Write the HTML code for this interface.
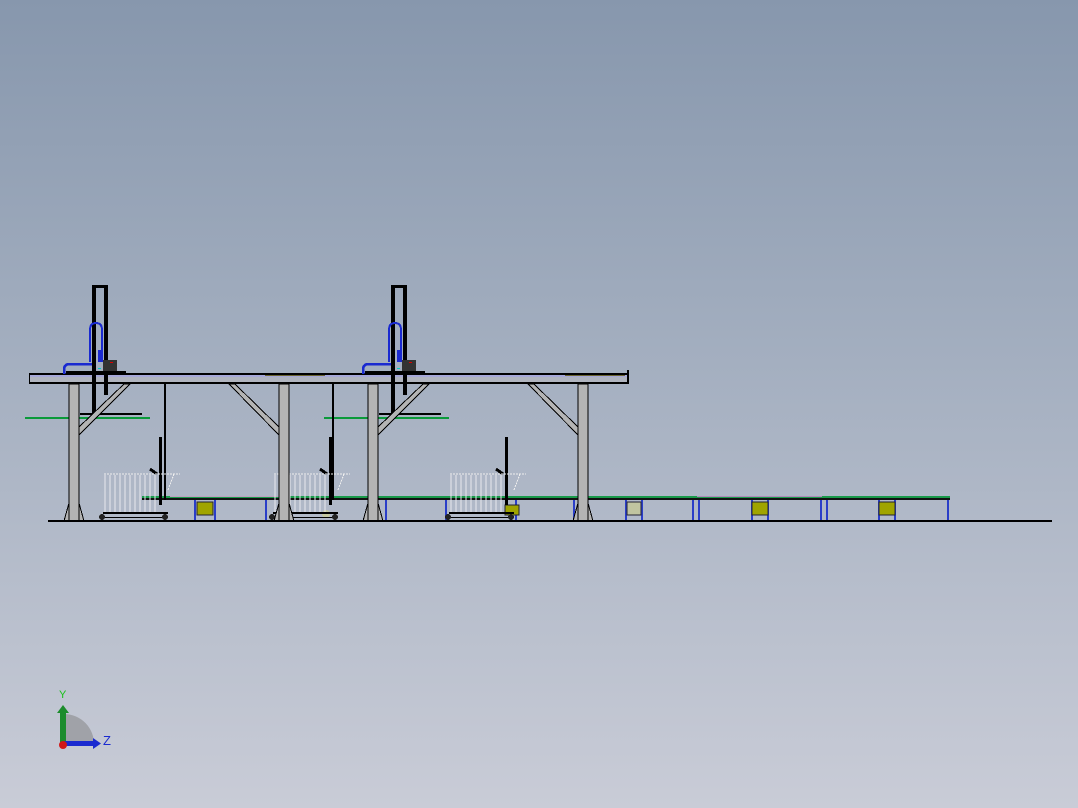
<!DOCTYPE html>
<html><head><meta charset="utf-8"><style>
html,body{margin:0;padding:0}
body{width:1078px;height:808px;overflow:hidden;background:linear-gradient(180deg,#8797ad 0%,#a4afc0 45%,#c9ccd7 100%);}
svg{position:absolute;left:0;top:0}
</style></head><body>
<svg width="1078" height="808" viewBox="0 0 1078 808" xmlns="http://www.w3.org/2000/svg" shape-rendering="crispEdges">
<defs>
<g id="tower">
  <rect x="92" y="285" width="4" height="128" fill="#000"/>
  <rect x="104" y="285" width="4" height="110" fill="#000"/>
  <rect x="92" y="285" width="16" height="3" fill="#000"/>
  <path d="M90 362 V330 Q90 323 96 323 Q102 323 102 330 V362" fill="none" stroke="#1a2ad0" stroke-width="2"/>
  <rect x="98" y="350" width="4" height="12" fill="#1a2ad0"/>
  <path d="M92 364 H70 Q64 364 64 370 V374" fill="none" stroke="#1a2ad0" stroke-width="2.5"/>
  <rect x="103" y="360" width="14" height="12" fill="#333"/>
  <rect x="110" y="362" width="3" height="1" fill="#d00"/>
  <rect x="98" y="368" width="3" height="1" fill="#0cc"/>
  <rect x="66" y="371" width="60" height="3" fill="#000"/>
  <rect x="80" y="413" width="62" height="2" fill="#000"/>
  <rect x="25" y="417" width="125" height="2" fill="#0a9a3a"/>
</g>
<g id="cart">
  <rect x="159" y="437" width="3" height="68" fill="#000"/>
  <path d="M150 469 L157 474" stroke="#000" stroke-width="3"/>
  <g stroke="#e8e8ee" stroke-width="1">
    <path d="M105 475 V512 M110 475 V512 M115 475 V512 M120 475 V512 M125 475 V512 M130 475 V512 M135 475 V512 M140 475 V512 M145 475 V512 M150 475 V512 M155 475 V512"/>
  </g>
  <path d="M104 474 H176 L180 474 M174 474 L168 490" stroke="#eee" stroke-width="1" stroke-dasharray="2 1" fill="none"/>
  <rect x="103" y="512" width="65" height="2" fill="#000"/>
  <rect x="103" y="517" width="65" height="1" fill="#000"/>
  <circle cx="102" cy="517" r="3" fill="#222"/>
  <circle cx="165" cy="517" r="3" fill="#222"/>
</g>
<g id="col">
  <rect x="69" y="384" width="10" height="137" fill="#b4b4b4" stroke="#000" stroke-width="1"/>
  <path d="M64 521 L69 503 V521 Z M84 521 L79 503 V521 Z" fill="#b4b4b4" stroke="#000" stroke-width="1"/>
</g>
</defs>

<rect x="29" y="373" width="599" height="2" fill="#000"/>
<rect x="29" y="375" width="599" height="2" fill="#a6a8d8"/>
<rect x="29" y="377" width="599" height="5" fill="#b0b4be"/>
<rect x="29" y="382" width="599" height="2" fill="#000"/>
<rect x="29" y="373" width="1" height="11" fill="#000"/>
<rect x="627" y="370" width="2" height="14" fill="#000"/>
<rect x="265" y="375" width="60" height="1" fill="#6b6530"/>
<rect x="565" y="375" width="60" height="1" fill="#6b6530"/>

<rect x="142" y="496" width="808" height="2" fill="#1a9a4a"/>
<rect x="142" y="498" width="808" height="2" fill="#111"/>
<rect x="697" y="496" width="125" height="1" fill="#b088b8"/>
<rect x="170" y="496" width="110" height="1" fill="#c0a0c0"/>
<g fill="#2a3ec8">
  <rect x="194" y="500" width="2" height="21"/><rect x="214" y="500" width="2" height="21"/>
  <rect x="265" y="500" width="2" height="21"/><rect x="385" y="500" width="2" height="21"/>
  <rect x="445" y="500" width="2" height="21"/><rect x="515" y="500" width="2" height="21"/>
  <rect x="573" y="500" width="2" height="21"/><rect x="625" y="500" width="2" height="21"/>
  <rect x="641" y="500" width="2" height="21"/><rect x="692" y="500" width="2" height="21"/>
  <rect x="698" y="500" width="2" height="21"/><rect x="751" y="500" width="2" height="21"/>
  <rect x="767" y="500" width="2" height="21"/><rect x="820" y="500" width="2" height="21"/>
  <rect x="826" y="500" width="2" height="21"/><rect x="878" y="500" width="2" height="21"/>
  <rect x="894" y="500" width="2" height="21"/><rect x="947" y="500" width="2" height="21"/>
</g>
<g fill="#a0a400" stroke="#223" stroke-width="1">
  <rect x="197" y="502" width="16" height="13"/>
  <rect x="752" y="502" width="16" height="13"/>
  <rect x="879" y="502" width="16" height="13"/>
  <rect x="505" y="505" width="14" height="10"/>
</g>
<rect x="627" y="502" width="14" height="13" fill="#c0c4a0" stroke="#223"/>
<circle cx="326" cy="514" r="4" fill="#c4c8a0"/>

<use href="#tower"/>
<use href="#tower" x="299"/>
<rect x="164" y="384" width="2" height="116" fill="#000"/>
<rect x="332" y="384" width="2" height="116" fill="#000"/>
<use href="#cart"/>
<use href="#cart" x="170"/>
<use href="#cart" x="346"/>

<g fill="#b4b4b4" stroke="#000" stroke-width="1">
  <path d="M79 427 L124 384 L130 384 L79 435 Z"/>
  <path d="M229 384 L235 384 L279 427 L279 435 Z"/>
  <path d="M378 427 L423 384 L429 384 L378 435 Z"/>
  <path d="M528 384 L534 384 L578 427 L578 435 Z"/>
</g>
<use href="#col"/>
<use href="#col" x="210"/>
<use href="#col" x="299"/>
<use href="#col" x="509"/>

<rect x="48" y="520" width="1004" height="2" fill="#000"/>

<g shape-rendering="geometricPrecision">
<path d="M64 745 V714 A30 30 0 0 1 94 745 Z" fill="#a0a2a8"/>
<rect x="60" y="712" width="6" height="33" fill="#1c8c2c"/>
<path d="M57 713 L63 705 L69 713 Z" fill="#1c8c2c"/>
<rect x="64" y="741" width="30" height="5" fill="#1a2ad0"/>
<path d="M93 738 L101 743.5 L93 749 Z" fill="#1a2ad0"/>
<circle cx="63" cy="745" r="4" fill="#d01818"/>
<text x="59" y="698" font-family="Liberation Sans, sans-serif" font-size="11" fill="#18c018">Y</text>
<text x="103" y="745" font-family="Liberation Sans, sans-serif" font-size="13" fill="#1a2ad0">Z</text>
</g>
</svg>
</body></html>
